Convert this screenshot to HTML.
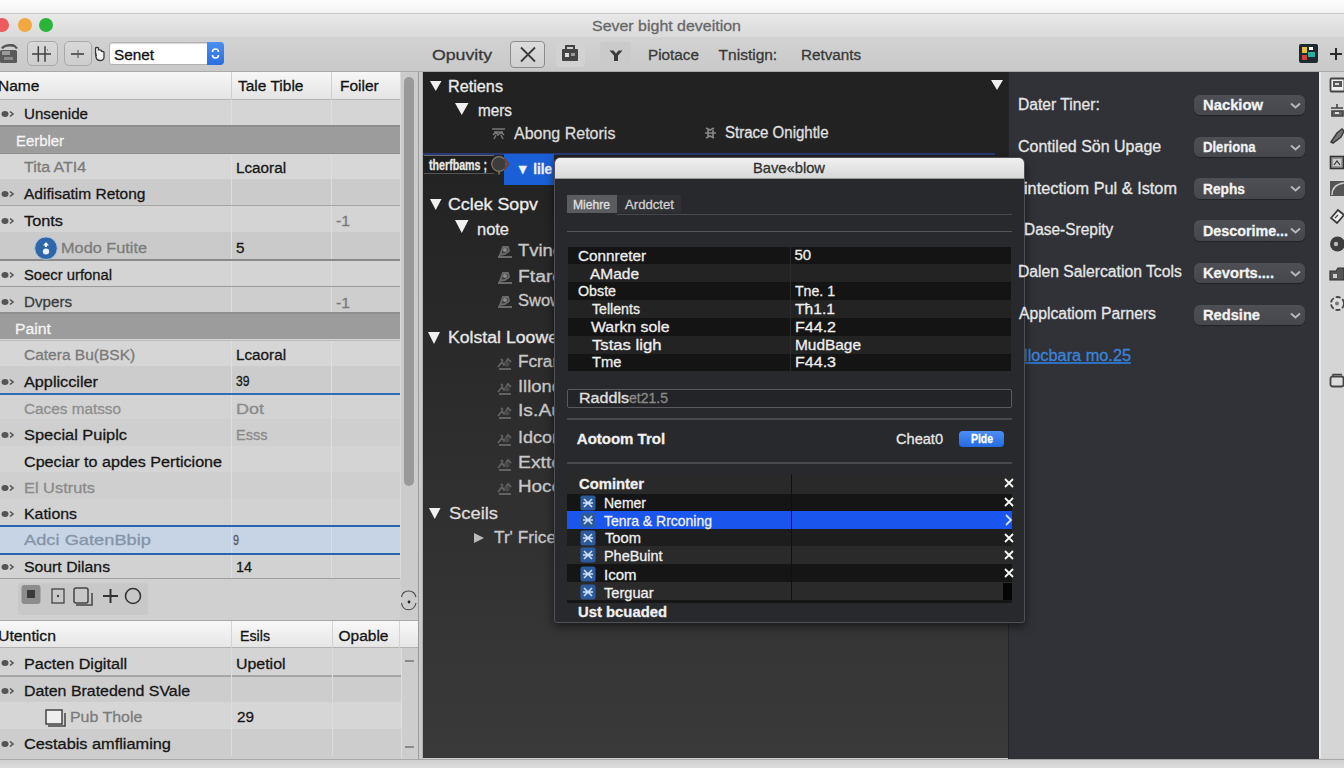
<!DOCTYPE html>
<html><head><meta charset="utf-8">
<style>
*{margin:0;padding:0;box-sizing:border-box}
html,body{width:1344px;height:768px;overflow:hidden;background:#d2d2d2;font-family:"Liberation Sans",sans-serif;position:relative}
.a{position:absolute}
.t{position:absolute;white-space:nowrap;line-height:1;transform-origin:0 50%;-webkit-text-stroke:0.3px currentColor}
svg.a{overflow:visible}
</style></head><body>
<div class="a" style="left:0px;top:0px;width:1344px;height:13px;background:linear-gradient(#fcfcfc,#f3f3f3)"></div>
<div class="a" style="left:0px;top:13px;width:1344px;height:24px;background:linear-gradient(#e8e8e8,#dadada);border-top:1px solid #c8c8c8"></div>
<div class="a" style="left:-5px;top:18px;width:14px;height:14px;border-radius:7px;background:#ec5b5d"></div>
<div class="a" style="left:18px;top:18px;width:14px;height:14px;border-radius:7px;background:#f2a83e"></div>
<div class="a" style="left:39px;top:18px;width:14px;height:14px;border-radius:7px;background:#2bb43a"></div>
<div class="a" style="left:0px;top:37px;width:1344px;height:35px;background:linear-gradient(#d2d2d2,#c9c9c9);border-bottom:1px solid #aaaaaa"></div>
<svg class="a" style="left:0;top:42px" width="20" height="22" viewBox="0 0 20 22"><path d="M1 6C3 2 12 1 15 3l3 3-2 1-2-2C11 4 5 4 3 7z" fill="#555"/><rect x="0" y="8" width="17" height="13" rx="1.5" fill="#5a5a5a"/><rect x="2" y="9" width="8" height="4" fill="#9a9a9a"/><rect x="4" y="15" width="9" height="3" fill="#8a8a8a"/></svg>
<div class="a" style="left:26.5px;top:41.3px;width:31.5px;height:24.5px;border:1px solid #a9a9a9;border-radius:5px;background:linear-gradient(#d9d9d9,#cdcdcd)"></div>
<svg class="a" style="left:26px;top:41px" width="32" height="25" viewBox="0 0 32 25"><path d="M12.3 5.2v15.5M19 5.2v15.5M6 13h19" stroke="#404040" stroke-width="1.5"/><path d="M21 9h1" stroke="#555" stroke-width="1.2"/></svg>
<div class="a" style="left:64px;top:41.3px;width:27.5px;height:24.5px;border:1px solid #a9a9a9;border-radius:5px;background:linear-gradient(#d9d9d9,#cdcdcd)"></div>
<svg class="a" style="left:64px;top:41px" width="28" height="25" viewBox="0 0 28 25"><path d="M7 13h13" stroke="#404040" stroke-width="1.6"/><path d="M14 9v8" stroke="#606060" stroke-width="1.2"/></svg>
<svg class="a" style="left:94px;top:46px" width="11" height="15" viewBox="0 0 11 15"><path d="M1.5 2.5c0-1.5 3-1.5 3 0v2c0-1 3-1 3 0.5v1c0-1 2.5-1 2.5 0.5v4.5c0 2.5-2 3.5-4 3.5s-3.5-1-4-3.5L1.5 7z" fill="#f2f2f2" stroke="#3a3a3a" stroke-width="1.3"/><path d="M1.5 6l1 4" stroke="#3a3a3a" stroke-width="1"/></svg>
<div class="a" style="left:109px;top:42px;width:115px;height:23px;background:#fff;border:1px solid #b0b0b0;border-radius:3px;box-shadow:inset 0 1px 1px rgba(0,0,0,.15)"></div>
<div class="a" style="left:207px;top:42px;width:17px;height:23px;background:linear-gradient(#4a90f0,#2a6ee0);border-radius:0 4px 4px 0"></div>
<svg class="a" style="left:209px;top:46px" width="13" height="15" viewBox="0 0 13 15"><path d="M3.5 6a3 3 0 0 1 6 0M9.5 9a3 3 0 0 1-6 0" fill="none" stroke="#fff" stroke-width="1.6"/></svg>
<div class="a" style="left:510px;top:41px;width:35px;height:27px;border:1px solid #8c8c8c;border-radius:4px;background:linear-gradient(#dcdcdc,#cfcfcf)"></div>
<svg class="a" style="left:519px;top:46px" width="18" height="17" viewBox="0 0 18 17"><path d="M2 1.5L16 15.5M16 1.5L2 15.5" stroke="#3a3a3a" stroke-width="1.8"/></svg>
<div class="a" style="left:556px;top:41px;width:29px;height:26px;border-radius:4px;background:#d2d2d2"></div>
<svg class="a" style="left:561px;top:45px" width="18" height="17" viewBox="0 0 18 17"><rect x="1" y="4" width="16" height="12" rx="1" fill="#444"/><rect x="5" y="1" width="8" height="4" fill="none" stroke="#444" stroke-width="2"/><rect x="4" y="8" width="4" height="4" fill="#ddd"/><rect x="10" y="8" width="4" height="3" fill="#999"/></svg>
<div class="a" style="left:600px;top:42px;width:31px;height:24px;border-radius:4px;background:#cacaca"></div>
<svg class="a" style="left:609px;top:49px" width="14" height="13" viewBox="0 0 14 13"><path d="M0.5 1.5h4l2.5 3 2.5-3h4L9 6.5V12H5V6.5z" fill="#3a3a3a"/></svg>
<svg class="a" style="left:1299px;top:44px" width="19" height="19" viewBox="0 0 19 19"><rect width="19" height="19" rx="2" fill="#1d2a30"/><rect x="3" y="3" width="5" height="6" fill="#e8c040"/><rect x="9" y="8" width="7" height="5" fill="#2ab0a0"/><rect x="3" y="11" width="5" height="5" fill="#d04040"/><rect x="10" y="3" width="4" height="3" fill="#fff"/></svg>
<svg class="a" style="left:1329px;top:47px" width="14" height="14" viewBox="0 0 14 14"><path d="M1 7h12M7 1v12" stroke="#2a2a2a" stroke-width="2"/></svg>
<div class="a" style="left:0px;top:72px;width:423px;height:686px;background:#cdcdcd"></div>
<div class="a" style="left:0px;top:72px;width:418px;height:28px;background:linear-gradient(#f7f7f7,#e4e4e4);border-bottom:1px solid #b5b5b5"></div>
<div class="a" style="left:231px;top:72px;width:1px;height:28px;background:#d0d0d0"></div>
<div class="a" style="left:331px;top:72px;width:1px;height:28px;background:#d0d0d0"></div>
<div class="a" style="left:0px;top:100px;width:401px;height:26px;background:#d5d5d5"></div>
<div class="a" style="left:0px;top:126px;width:401px;height:27px;background:#9c9c9c"></div>
<div class="a" style="left:0px;top:153px;width:401px;height:26px;background:#d7d7d7"></div>
<div class="a" style="left:0px;top:179px;width:401px;height:26.5px;background:#cbcbcb"></div>
<div class="a" style="left:0px;top:205.5px;width:401px;height:26.5px;background:#d4d4d4"></div>
<div class="a" style="left:0px;top:232px;width:401px;height:27px;background:#cacaca"></div>
<div class="a" style="left:0px;top:259px;width:401px;height:27px;background:#d4d4d4"></div>
<div class="a" style="left:0px;top:286px;width:401px;height:26.5px;background:#cecece"></div>
<div class="a" style="left:0px;top:312.5px;width:401px;height:26.5px;background:#9c9c9c"></div>
<div class="a" style="left:0px;top:339px;width:401px;height:27px;background:#d6d6d6"></div>
<div class="a" style="left:0px;top:366px;width:401px;height:26.5px;background:#cccccc"></div>
<div class="a" style="left:0px;top:392.5px;width:401px;height:26.5px;background:#d3d3d3"></div>
<div class="a" style="left:0px;top:419px;width:401px;height:27px;background:#cfcfcf"></div>
<div class="a" style="left:0px;top:446px;width:401px;height:26px;background:#d4d4d4"></div>
<div class="a" style="left:0px;top:472px;width:401px;height:27px;background:#cfcfcf"></div>
<div class="a" style="left:0px;top:499px;width:401px;height:27px;background:#d2d2d2"></div>
<div class="a" style="left:0px;top:526px;width:401px;height:26.5px;background:#c6d4e6"></div>
<div class="a" style="left:0px;top:552.5px;width:401px;height:26.5px;background:#d2d2d2"></div>
<div class="a" style="left:231px;top:100px;width:1px;height:26px;background:#dedede"></div>
<div class="a" style="left:331px;top:100px;width:1px;height:26px;background:#dedede"></div>
<div class="a" style="left:231px;top:153px;width:1px;height:26px;background:#dedede"></div>
<div class="a" style="left:331px;top:153px;width:1px;height:26px;background:#dedede"></div>
<div class="a" style="left:231px;top:179px;width:1px;height:26.5px;background:#dedede"></div>
<div class="a" style="left:331px;top:179px;width:1px;height:26.5px;background:#dedede"></div>
<div class="a" style="left:231px;top:205.5px;width:1px;height:26.5px;background:#dedede"></div>
<div class="a" style="left:331px;top:205.5px;width:1px;height:26.5px;background:#dedede"></div>
<div class="a" style="left:231px;top:232px;width:1px;height:27px;background:#dedede"></div>
<div class="a" style="left:331px;top:232px;width:1px;height:27px;background:#dedede"></div>
<div class="a" style="left:231px;top:259px;width:1px;height:27px;background:#dedede"></div>
<div class="a" style="left:331px;top:259px;width:1px;height:27px;background:#dedede"></div>
<div class="a" style="left:231px;top:286px;width:1px;height:26.5px;background:#dedede"></div>
<div class="a" style="left:331px;top:286px;width:1px;height:26.5px;background:#dedede"></div>
<div class="a" style="left:231px;top:339px;width:1px;height:27px;background:#dedede"></div>
<div class="a" style="left:331px;top:339px;width:1px;height:27px;background:#dedede"></div>
<div class="a" style="left:231px;top:366px;width:1px;height:26.5px;background:#dedede"></div>
<div class="a" style="left:331px;top:366px;width:1px;height:26.5px;background:#dedede"></div>
<div class="a" style="left:231px;top:392.5px;width:1px;height:26.5px;background:#dedede"></div>
<div class="a" style="left:331px;top:392.5px;width:1px;height:26.5px;background:#dedede"></div>
<div class="a" style="left:231px;top:419px;width:1px;height:27px;background:#dedede"></div>
<div class="a" style="left:331px;top:419px;width:1px;height:27px;background:#dedede"></div>
<div class="a" style="left:231px;top:446px;width:1px;height:26px;background:#dedede"></div>
<div class="a" style="left:331px;top:446px;width:1px;height:26px;background:#dedede"></div>
<div class="a" style="left:231px;top:472px;width:1px;height:27px;background:#dedede"></div>
<div class="a" style="left:331px;top:472px;width:1px;height:27px;background:#dedede"></div>
<div class="a" style="left:231px;top:499px;width:1px;height:27px;background:#dedede"></div>
<div class="a" style="left:331px;top:499px;width:1px;height:27px;background:#dedede"></div>
<div class="a" style="left:231px;top:526px;width:1px;height:26.5px;background:#dedede"></div>
<div class="a" style="left:331px;top:526px;width:1px;height:26.5px;background:#dedede"></div>
<div class="a" style="left:231px;top:552.5px;width:1px;height:26.5px;background:#dedede"></div>
<div class="a" style="left:331px;top:552.5px;width:1px;height:26.5px;background:#dedede"></div>
<div class="a" style="left:0px;top:125px;width:401px;height:1.5px;background:#8e8e8e"></div>
<div class="a" style="left:0px;top:152.5px;width:401px;height:1px;background:#8e8e8e"></div>
<div class="a" style="left:0px;top:205px;width:401px;height:1px;background:#a6a6a6"></div>
<div class="a" style="left:0px;top:258.5px;width:401px;height:2.5px;background:#8a8a8a"></div>
<div class="a" style="left:0px;top:285.5px;width:401px;height:1.5px;background:#9a9a9a"></div>
<div class="a" style="left:0px;top:312px;width:401px;height:1.5px;background:#8e8e8e"></div>
<div class="a" style="left:0px;top:340px;width:401px;height:1px;background:#bdbdbd"></div>
<div class="a" style="left:0px;top:393px;width:401px;height:2px;background:#2f6eb5"></div>
<div class="a" style="left:0px;top:525px;width:401px;height:2px;background:#2c64b0"></div>
<div class="a" style="left:0px;top:552.5px;width:401px;height:2px;background:#2c64b0"></div>
<div class="a" style="left:0px;top:578px;width:401px;height:1.5px;background:#9e9e9e"></div>
<svg class="a" style="left:1px;top:108.5px" width="14" height="10" viewBox="0 0 14 10"><ellipse cx="4" cy="5" rx="3.5" ry="3" fill="#555"/><path d="M9 2.5l3 2.5-3 2.5" fill="none" stroke="#555" stroke-width="1.6"/></svg>
<svg class="a" style="left:1px;top:189px" width="14" height="10" viewBox="0 0 14 10"><ellipse cx="4" cy="5" rx="3.5" ry="3" fill="#555"/><path d="M9 2.5l3 2.5-3 2.5" fill="none" stroke="#555" stroke-width="1.6"/></svg>
<svg class="a" style="left:1px;top:216px" width="14" height="10" viewBox="0 0 14 10"><ellipse cx="4" cy="5" rx="3.5" ry="3" fill="#555"/><path d="M9 2.5l3 2.5-3 2.5" fill="none" stroke="#555" stroke-width="1.6"/></svg>
<svg class="a" style="left:1px;top:269.5px" width="14" height="10" viewBox="0 0 14 10"><ellipse cx="4" cy="5" rx="3.5" ry="3" fill="#555"/><path d="M9 2.5l3 2.5-3 2.5" fill="none" stroke="#555" stroke-width="1.6"/></svg>
<svg class="a" style="left:1px;top:297px" width="14" height="10" viewBox="0 0 14 10"><ellipse cx="4" cy="5" rx="3.5" ry="3" fill="#555"/><path d="M9 2.5l3 2.5-3 2.5" fill="none" stroke="#555" stroke-width="1.6"/></svg>
<svg class="a" style="left:1px;top:376.5px" width="14" height="10" viewBox="0 0 14 10"><ellipse cx="4" cy="5" rx="3.5" ry="3" fill="#555"/><path d="M9 2.5l3 2.5-3 2.5" fill="none" stroke="#555" stroke-width="1.6"/></svg>
<svg class="a" style="left:1px;top:430px" width="14" height="10" viewBox="0 0 14 10"><ellipse cx="4" cy="5" rx="3.5" ry="3" fill="#555"/><path d="M9 2.5l3 2.5-3 2.5" fill="none" stroke="#555" stroke-width="1.6"/></svg>
<svg class="a" style="left:1px;top:482.5px" width="14" height="10" viewBox="0 0 14 10"><ellipse cx="4" cy="5" rx="3.5" ry="3" fill="#555"/><path d="M9 2.5l3 2.5-3 2.5" fill="none" stroke="#555" stroke-width="1.6"/></svg>
<svg class="a" style="left:1px;top:509px" width="14" height="10" viewBox="0 0 14 10"><ellipse cx="4" cy="5" rx="3.5" ry="3" fill="#555"/><path d="M9 2.5l3 2.5-3 2.5" fill="none" stroke="#555" stroke-width="1.6"/></svg>
<svg class="a" style="left:1px;top:562px" width="14" height="10" viewBox="0 0 14 10"><ellipse cx="4" cy="5" rx="3.5" ry="3" fill="#555"/><path d="M9 2.5l3 2.5-3 2.5" fill="none" stroke="#555" stroke-width="1.6"/></svg>
<svg class="a" style="left:34px;top:236px" width="25" height="25" viewBox="0 0 25 25"><circle cx="12" cy="12.2" r="11.3" fill="#2f66aa" stroke="#a9c2dc" stroke-width="1"/><path d="M9 9.5l3-3.5 3 3.5h-2v1.5h-2V9.5z" fill="#f4f8ff"/><ellipse cx="12" cy="15.5" rx="3.2" ry="3" fill="#e8f0ff"/></svg>
<div class="a" style="left:400px;top:72px;width:18px;height:545px;background:#cbcbcb;border-left:1px solid #dadada"></div>
<div class="a" style="left:404.4px;top:77px;width:9.5px;height:409px;background:#999;border-radius:5px"></div>
<div class="a" style="left:418px;top:72px;width:5px;height:687px;background:#cbcbcb;border-left:1px solid #9c9c9c;border-right:1px solid #b0b0b0"></div>
<div class="a" style="left:0px;top:579px;width:401px;height:41px;background:#d0d0d0"></div>
<div class="a" style="left:18px;top:582.5px;width:130px;height:32px;background:#c8c8c8;border-radius:3px"></div>
<svg class="a" style="left:20px;top:584px" width="126" height="28" viewBox="0 0 126 28"><rect x="1.5" y="1" width="19" height="19" rx="3" fill="#8c8c8c"/><rect x="7" y="6" width="8" height="8" fill="#3a3a3a"/><rect x="32" y="5" width="12" height="14" fill="none" stroke="#444" stroke-width="1.3"/><circle cx="38" cy="12" r="1.2" fill="#444"/><rect x="54" y="4" width="14" height="15" rx="2" fill="none" stroke="#444" stroke-width="1.5"/><path d="M56 21h16v-12" fill="none" stroke="#444" stroke-width="1.5"/><path d="M83 12h15M90.5 5v14" stroke="#333" stroke-width="2"/><circle cx="113" cy="12" r="7.5" fill="none" stroke="#333" stroke-width="1.6"/></svg>
<svg class="a" style="left:400px;top:585px" width="18" height="31" viewBox="0 0 18 31"><path d="M1.5 12C3 4 14 4 16 12" fill="none" stroke="#444" stroke-width="1.1"/><path d="M1.5 18C3 27 14 27 16 18" fill="none" stroke="#444" stroke-width="1.1"/><circle cx="9" cy="17" r="1.4" fill="#222"/></svg>
<div class="a" style="left:0px;top:619.5px;width:418px;height:1.5px;background:#a9a9a9"></div>
<div class="a" style="left:0px;top:621px;width:418px;height:27px;background:linear-gradient(#f8f8f8,#e6e6e6);border-bottom:1px solid #b2b2b2"></div>
<div class="a" style="left:231px;top:621px;width:1px;height:27px;background:#d4d4d4"></div>
<div class="a" style="left:332px;top:621px;width:1px;height:27px;background:#d4d4d4"></div>
<div class="a" style="left:399px;top:621px;width:1px;height:27px;background:#d4d4d4"></div>
<div class="a" style="left:0px;top:648px;width:401px;height:27.5px;background:#d4d4d4"></div>
<div class="a" style="left:0px;top:675.5px;width:401px;height:26.5px;background:#cdcdcd"></div>
<div class="a" style="left:0px;top:702px;width:401px;height:27px;background:#d6d6d6"></div>
<div class="a" style="left:0px;top:729px;width:401px;height:27px;background:#cdcdcd"></div>
<div class="a" style="left:0px;top:675px;width:401px;height:1.5px;background:#a6a6a6"></div>
<div class="a" style="left:231px;top:648px;width:1px;height:108px;background:#dcdcdc"></div>
<div class="a" style="left:332px;top:648px;width:1px;height:108px;background:#dcdcdc"></div>
<div class="a" style="left:401px;top:648px;width:17px;height:110px;background:#cdcdcd;border-left:1px solid #dedede"></div>
<div class="a" style="left:405px;top:660px;width:9px;height:1.5px;background:#8a8a8a"></div>
<div class="a" style="left:405px;top:746px;width:9px;height:1.5px;background:#8a8a8a"></div>
<svg class="a" style="left:1px;top:658.4px" width="14" height="10" viewBox="0 0 14 10"><ellipse cx="4" cy="5" rx="3.5" ry="3" fill="#555"/><path d="M9 2.5l3 2.5-3 2.5" fill="none" stroke="#555" stroke-width="1.6"/></svg>
<svg class="a" style="left:1px;top:685.6px" width="14" height="10" viewBox="0 0 14 10"><ellipse cx="4" cy="5" rx="3.5" ry="3" fill="#555"/><path d="M9 2.5l3 2.5-3 2.5" fill="none" stroke="#555" stroke-width="1.6"/></svg>
<svg class="a" style="left:1px;top:738.7px" width="14" height="10" viewBox="0 0 14 10"><ellipse cx="4" cy="5" rx="3.5" ry="3" fill="#555"/><path d="M9 2.5l3 2.5-3 2.5" fill="none" stroke="#555" stroke-width="1.6"/></svg>
<svg class="a" style="left:45px;top:709px" width="21" height="18" viewBox="0 0 21 18"><rect x="1" y="1" width="16" height="14" fill="#eee" stroke="#444" stroke-width="1.5"/><path d="M3 17h17V4" fill="none" stroke="#444" stroke-width="1.5"/></svg>
<div class="t" style="left:592px;top:19.4px;font-size:14.5px;color:#686868;transform:scaleX(1.100);">Sever bight deveition</div>
<div class="t" style="left:114px;top:46.9px;font-size:15.5px;color:#111;transform:scaleX(0.988);">Senet</div>
<div class="t" style="left:431.5px;top:47.4px;font-size:15.5px;color:#383838;transform:scaleX(1.142);">Opuvity</div>
<div class="t" style="left:648px;top:47.4px;font-size:15.5px;color:#383838;transform:scaleX(0.986);">Piotace</div>
<div class="t" style="left:718.6px;top:47.4px;font-size:15.5px;color:#383838;">Tnistign:</div>
<div class="t" style="left:800.7px;top:47.4px;font-size:15.5px;color:#383838;transform:scaleX(0.981);">Retvants</div>
<div class="t" style="left:-2px;top:77.9px;font-size:15.5px;color:#141414;">Name</div>
<div class="t" style="left:238px;top:77.9px;font-size:15.5px;color:#141414;">Tale Tible</div>
<div class="t" style="left:340px;top:77.9px;font-size:15.5px;color:#141414;">Foiler</div>
<div class="t" style="left:24px;top:105.9px;font-size:15.5px;color:#161616;transform:scaleX(0.977);">Unsenide</div>
<div class="t" style="left:15.5px;top:132.9px;font-size:15.5px;color:#f4f4f4;transform:scaleX(0.961);">Eerbler</div>
<div class="t" style="left:24px;top:159.4px;font-size:15.5px;color:#7a7a7a;transform:scaleX(1.030);">Tita ATI4</div>
<div class="t" style="left:235.5px;top:159.7px;font-size:15.5px;color:#161616;transform:scaleX(0.984);">Lcaoral</div>
<div class="t" style="left:24px;top:186.4px;font-size:15.5px;color:#161616;">Adifisatim Retong</div>
<div class="t" style="left:24px;top:213.2px;font-size:15.5px;color:#161616;transform:scaleX(1.053);">Tonts</div>
<div class="t" style="left:336px;top:213.4px;font-size:15.5px;color:#7a7a7a;transform:scaleX(1.016);">-1</div>
<div class="t" style="left:61px;top:240.1px;font-size:15.5px;color:#7c7c7c;transform:scaleX(1.051);">Modo Futite</div>
<div class="t" style="left:235.5px;top:239.9px;font-size:15.5px;color:#161616;transform:scaleX(0.986);">5</div>
<div class="t" style="left:24px;top:267.1px;font-size:15.5px;color:#161616;transform:scaleX(0.955);">Soecr urfonal</div>
<div class="t" style="left:24px;top:294.4px;font-size:15.5px;color:#3c3c3c;transform:scaleX(0.978);">Dvpers</div>
<div class="t" style="left:336px;top:295.2px;font-size:15.5px;color:#7a7a7a;transform:scaleX(1.016);">-1</div>
<div class="t" style="left:15px;top:320.8px;font-size:15.5px;color:#f4f4f4;transform:scaleX(1.019);">Paint</div>
<div class="t" style="left:24px;top:347.4px;font-size:15.5px;color:#7a7a7a;">Catera Bu(BSK)</div>
<div class="t" style="left:235.5px;top:347.1px;font-size:15.5px;color:#161616;transform:scaleX(0.984);">Lcaoral</div>
<div class="t" style="left:24px;top:373.8px;font-size:15.5px;color:#161616;transform:scaleX(1.048);">Applicciler</div>
<div class="t" style="left:235.5px;top:373.4px;font-size:15.5px;color:#161616;transform:scaleX(0.783);">39</div>
<div class="t" style="left:24px;top:401.2px;font-size:15.5px;color:#8e8e8e;transform:scaleX(0.988);">Caces matsso</div>
<div class="t" style="left:236px;top:400.9px;font-size:15.5px;color:#8a8a8a;transform:scaleX(1.161);">Dot</div>
<div class="t" style="left:24px;top:427.4px;font-size:15.5px;color:#161616;transform:scaleX(1.058);">Special Puiplc</div>
<div class="t" style="left:235.5px;top:427.4px;font-size:15.5px;color:#8a8a8a;transform:scaleX(0.938);">Esss</div>
<div class="t" style="left:24px;top:454.0px;font-size:15.5px;color:#161616;transform:scaleX(1.040);">Cpeciar to apdes Perticione</div>
<div class="t" style="left:24px;top:479.9px;font-size:15.5px;color:#8a8a8a;transform:scaleX(1.057);">El Ustruts</div>
<div class="t" style="left:24px;top:506.4px;font-size:15.5px;color:#161616;transform:scaleX(1.025);">Kations</div>
<div class="t" style="left:24px;top:532.4px;font-size:15.5px;color:#8594a6;transform:scaleX(1.179);">Adci GatenBbip</div>
<div class="t" style="left:233px;top:532.4px;font-size:15.5px;color:#5a5a5a;transform:scaleX(0.696);">9</div>
<div class="t" style="left:24px;top:559.4px;font-size:15.5px;color:#161616;transform:scaleX(1.019);">Sourt Dilans</div>
<div class="t" style="left:235.5px;top:559.4px;font-size:15.5px;color:#161616;transform:scaleX(0.928);">14</div>
<div class="t" style="left:-2px;top:628.0px;font-size:15.5px;color:#141414;transform:scaleX(1.020);">Utenticn</div>
<div class="t" style="left:240px;top:628.0px;font-size:15.5px;color:#141414;transform:scaleX(0.917);">Esils</div>
<div class="t" style="left:338.5px;top:628.0px;font-size:15.5px;color:#141414;">Opable</div>
<div class="t" style="left:24px;top:655.8px;font-size:15.5px;color:#161616;transform:scaleX(1.040);">Pacten Digitall</div>
<div class="t" style="left:236px;top:655.8px;font-size:15.5px;color:#161616;transform:scaleX(1.026);">Upetiol</div>
<div class="t" style="left:24px;top:683.0px;font-size:15.5px;color:#161616;transform:scaleX(1.027);">Daten Bratedend SVale</div>
<div class="t" style="left:69.7px;top:709.4px;font-size:15.5px;color:#7c7c7c;transform:scaleX(1.027);">Pub Thole</div>
<div class="t" style="left:236.7px;top:709.4px;font-size:15.5px;color:#161616;transform:scaleX(0.986);">29</div>
<div class="t" style="left:24px;top:736.1px;font-size:15.5px;color:#161616;transform:scaleX(1.053);">Cestabis amfliaming</div>
<div class="a" style="left:423px;top:72px;width:585px;height:686px;background:linear-gradient(#212121 0px,#242424 130px,#2b2b2b 300px,#323232 490px,#3a3a3a 686px)"></div>
<svg class="a" style="left:430px;top:81px" width="11.5" height="10" viewBox="0 0 11.5 10"><path d="M0 0H11.5L5.75 10z" fill="#f0f0f0"/></svg>
<svg class="a" style="left:455px;top:103px" width="13.5" height="12" viewBox="0 0 13.5 12"><path d="M0 0H13.5L6.75 12z" fill="#f0f0f0"/></svg>
<svg class="a" style="left:490px;top:125px" width="17" height="16" viewBox="0 0 17 16"><path d="M2 4h13M4 7h9M3 10l3-3 2 3 3-3 3 3M4 14l2-4M13 14l-2-4" stroke="#777" stroke-width="1.5" fill="none"/></svg>
<svg class="a" style="left:703px;top:125px" width="15" height="17" viewBox="0 0 15 17"><path d="M3 3l4 2 4-2M2 8h11M3 13l4-2 4 2M5 5v7M10 5v7" stroke="#888" stroke-width="1.6" fill="none"/></svg>
<svg class="a" style="left:991px;top:80px" width="12" height="10" viewBox="0 0 12 10"><path d="M0 0H12L6.0 10z" fill="#f0f0f0"/></svg>
<div class="a" style="left:423px;top:153px;width:572px;height:2px;background:#2a3a78"></div>
<div class="a" style="left:504px;top:153.5px;width:50px;height:31.5px;background:#1b5fd6"></div>
<div class="a" style="left:424px;top:154.5px;width:70px;height:19px;background:#1f1f1f;border-top:1.5px solid #6a6a6a;border-bottom:1px solid #555"></div>
<svg class="a" style="left:491px;top:155px" width="18" height="20" viewBox="0 0 18 20"><circle cx="8" cy="9" r="7.3" fill="#3c3c3c" stroke="#8a7a6a" stroke-width="1.2"/><path d="M13 3.5l4 5.5-4 5.5" fill="none" stroke="#7a3a20" stroke-width="2"/><path d="M8 16.5v3" stroke="#8a7a40" stroke-width="1.5"/></svg>
<svg class="a" style="left:430px;top:199px" width="11.5" height="11" viewBox="0 0 11.5 11"><path d="M0 0H11.5L5.75 11z" fill="#f0f0f0"/></svg>
<svg class="a" style="left:455px;top:220px" width="13.5" height="13" viewBox="0 0 13.5 13"><path d="M0 0H13.5L6.75 13z" fill="#f0f0f0"/></svg>
<svg class="a" style="left:496px;top:244px" width="18" height="15" viewBox="0 0 18 15"><path d="M2 13h14M4 11l3-8h5l1 4-4 3z" stroke="#6a6a6a" stroke-width="1.8" fill="#3e3e3e"/><circle cx="9" cy="6" r="2" fill="#888"/></svg>
<svg class="a" style="left:496px;top:269.6px" width="18" height="15" viewBox="0 0 18 15"><path d="M2 13h14M4 11l3-8h5l1 4-4 3z" stroke="#6a6a6a" stroke-width="1.8" fill="#3e3e3e"/><circle cx="9" cy="6" r="2" fill="#888"/></svg>
<svg class="a" style="left:496px;top:294px" width="18" height="15" viewBox="0 0 18 15"><path d="M2 13h14M4 11l3-8h5l1 4-4 3z" stroke="#6a6a6a" stroke-width="1.8" fill="#3e3e3e"/><circle cx="9" cy="6" r="2" fill="#888"/></svg>
<svg class="a" style="left:428px;top:332px" width="12" height="12" viewBox="0 0 12 12"><path d="M0 0H12L6.0 12z" fill="#f0f0f0"/></svg>
<svg class="a" style="left:496px;top:355px" width="18" height="15" viewBox="0 0 18 15"><path d="M2 12l4-5 2 3 4-6 3 3M5 4l2 2M3 14h12" stroke="#626262" stroke-width="1.8" fill="none"/><circle cx="11" cy="9" r="2.5" fill="#4a4a4a"/></svg>
<svg class="a" style="left:496px;top:379.5px" width="18" height="15" viewBox="0 0 18 15"><path d="M2 12l4-5 2 3 4-6 3 3M5 4l2 2M3 14h12" stroke="#626262" stroke-width="1.8" fill="none"/><circle cx="11" cy="9" r="2.5" fill="#4a4a4a"/></svg>
<svg class="a" style="left:496px;top:404px" width="18" height="15" viewBox="0 0 18 15"><path d="M2 12l4-5 2 3 4-6 3 3M5 4l2 2M3 14h12" stroke="#626262" stroke-width="1.8" fill="none"/><circle cx="11" cy="9" r="2.5" fill="#4a4a4a"/></svg>
<svg class="a" style="left:496px;top:430.6px" width="18" height="15" viewBox="0 0 18 15"><path d="M2 12l4-5 2 3 4-6 3 3M5 4l2 2M3 14h12" stroke="#626262" stroke-width="1.8" fill="none"/><circle cx="11" cy="9" r="2.5" fill="#4a4a4a"/></svg>
<svg class="a" style="left:496px;top:455.8px" width="18" height="15" viewBox="0 0 18 15"><path d="M2 12l4-5 2 3 4-6 3 3M5 4l2 2M3 14h12" stroke="#626262" stroke-width="1.8" fill="none"/><circle cx="11" cy="9" r="2.5" fill="#4a4a4a"/></svg>
<svg class="a" style="left:496px;top:479.5px" width="18" height="15" viewBox="0 0 18 15"><path d="M2 12l4-5 2 3 4-6 3 3M5 4l2 2M3 14h12" stroke="#626262" stroke-width="1.8" fill="none"/><circle cx="11" cy="9" r="2.5" fill="#4a4a4a"/></svg>
<svg class="a" style="left:429px;top:508px" width="11.5" height="11" viewBox="0 0 11.5 11"><path d="M0 0H11.5L5.75 11z" fill="#f0f0f0"/></svg>
<svg class="a" style="left:474px;top:533px" width="10" height="10" viewBox="0 0 10 10"><path d="M0 0L10 5L0 10z" fill="#bbb"/></svg>
<div class="a" style="left:1008px;top:72px;width:311px;height:687px;background:#303237;border-left:1.5px solid #242528"></div>
<div class="a" style="left:1319px;top:72px;width:25px;height:686px;background:#d5d5d5;border-left:2px solid #e8e8e8"></div>
<div class="a" style="left:1194px;top:94.8px;width:111px;height:20.5px;background:linear-gradient(#4d4f54,#45474c);border-radius:6px;box-shadow:0 1px 1px rgba(0,0,0,.35)"></div>
<svg class="a" style="left:1290px;top:101.8px" width="11" height="7" viewBox="0 0 11 7"><path d="M1 1.5l4.5 4L10 1.5" fill="none" stroke="#b8b8b8" stroke-width="1.9"/></svg>
<div class="a" style="left:1194px;top:136.7px;width:111px;height:20.5px;background:linear-gradient(#4d4f54,#45474c);border-radius:6px;box-shadow:0 1px 1px rgba(0,0,0,.35)"></div>
<svg class="a" style="left:1290px;top:143.7px" width="11" height="7" viewBox="0 0 11 7"><path d="M1 1.5l4.5 4L10 1.5" fill="none" stroke="#b8b8b8" stroke-width="1.9"/></svg>
<div class="a" style="left:1194px;top:178.3px;width:111px;height:20.5px;background:linear-gradient(#4d4f54,#45474c);border-radius:6px;box-shadow:0 1px 1px rgba(0,0,0,.35)"></div>
<svg class="a" style="left:1290px;top:185.3px" width="11" height="7" viewBox="0 0 11 7"><path d="M1 1.5l4.5 4L10 1.5" fill="none" stroke="#b8b8b8" stroke-width="1.9"/></svg>
<div class="a" style="left:1194px;top:220.3px;width:111px;height:20.5px;background:linear-gradient(#4d4f54,#45474c);border-radius:6px;box-shadow:0 1px 1px rgba(0,0,0,.35)"></div>
<svg class="a" style="left:1290px;top:227.3px" width="11" height="7" viewBox="0 0 11 7"><path d="M1 1.5l4.5 4L10 1.5" fill="none" stroke="#b8b8b8" stroke-width="1.9"/></svg>
<div class="a" style="left:1194px;top:262.5px;width:111px;height:20.5px;background:linear-gradient(#4d4f54,#45474c);border-radius:6px;box-shadow:0 1px 1px rgba(0,0,0,.35)"></div>
<svg class="a" style="left:1290px;top:269.5px" width="11" height="7" viewBox="0 0 11 7"><path d="M1 1.5l4.5 4L10 1.5" fill="none" stroke="#b8b8b8" stroke-width="1.9"/></svg>
<div class="a" style="left:1194px;top:304.7px;width:111px;height:20.5px;background:linear-gradient(#4d4f54,#45474c);border-radius:6px;box-shadow:0 1px 1px rgba(0,0,0,.35)"></div>
<svg class="a" style="left:1290px;top:311.7px" width="11" height="7" viewBox="0 0 11 7"><path d="M1 1.5l4.5 4L10 1.5" fill="none" stroke="#b8b8b8" stroke-width="1.9"/></svg>
<div class="a" style="left:1024px;top:362px;width:107px;height:1.5px;background:#2f6fc0"></div>
<svg class="a" style="left:1329px;top:77px" width="17" height="17" viewBox="0 0 17 17"><rect x="1.5" y="1.5" width="14" height="13" rx="1" fill="#eee" stroke="#444" stroke-width="1.8"/><rect x="4" y="4" width="9" height="6" fill="#555"/><rect x="6" y="6" width="4" height="2" fill="#ddd"/></svg>
<svg class="a" style="left:1329px;top:102px" width="17" height="17" viewBox="0 0 17 17"><path d="M2 6h12M8 2v4M3 9h11v5H3z" fill="#666" stroke="#444" stroke-width="1.6"/><rect x="6" y="10" width="4" height="2" fill="#ddd"/></svg>
<svg class="a" style="left:1329px;top:127px" width="17" height="17" viewBox="0 0 17 17"><path d="M2 15l6-9 5-4 2 2-3 6-8 6z" fill="#777" stroke="#3a3a3a" stroke-width="1.5"/></svg>
<svg class="a" style="left:1329px;top:155px" width="17" height="17" viewBox="0 0 17 17"><rect x="1.5" y="1.5" width="13" height="12" fill="#999" stroke="#333" stroke-width="1.6"/><path d="M4 4h8v7H4z" fill="#ccc"/><path d="M5 10l3-4 3 4" stroke="#333" stroke-width="1.2" fill="none"/></svg>
<svg class="a" style="left:1329px;top:180px" width="17" height="17" viewBox="0 0 17 17"><rect x="1" y="1" width="15" height="15" fill="#555"/><path d="M3 15C3 8 7 4 15 3" stroke="#ccc" stroke-width="1.5" fill="none"/></svg>
<svg class="a" style="left:1329px;top:208px" width="17" height="17" viewBox="0 0 17 17"><path d="M2 10l7-8 6 5-7 8z" fill="#eee" stroke="#3a3a3a" stroke-width="1.8"/><path d="M6 10l3-3" stroke="#444" stroke-width="1.2"/></svg>
<svg class="a" style="left:1329px;top:235px" width="17" height="17" viewBox="0 0 17 17"><circle cx="8.5" cy="9" r="7.5" fill="#3d3d3d"/><circle cx="7" cy="9" r="2.2" fill="#bbb"/></svg>
<svg class="a" style="left:1329px;top:265px" width="17" height="17" viewBox="0 0 17 17"><path d="M1 6h6l2-3h6v12H1z" fill="#555" stroke="#333" stroke-width="1.2"/><rect x="4" y="9" width="4" height="4" fill="#ccc"/></svg>
<svg class="a" style="left:1329px;top:295px" width="17" height="17" viewBox="0 0 17 17"><circle cx="8.5" cy="8.5" r="6.5" fill="#ddd" stroke="#444" stroke-width="1.8" stroke-dasharray="5 2"/><circle cx="8" cy="8.5" r="2" fill="#777"/></svg>
<svg class="a" style="left:1329px;top:373px" width="17" height="17" viewBox="0 0 17 17"><rect x="1.5" y="3.5" width="13" height="10" rx="2" fill="#ddd" stroke="#444" stroke-width="1.8"/><path d="M4 3.5v-2h9" stroke="#444" stroke-width="1.4" fill="none"/></svg>
<div class="t" style="left:448px;top:79.0px;font-size:16px;color:#ececec;transform:scaleX(1.014);">Retiens</div>
<div class="t" style="left:478px;top:103.2px;font-size:16px;color:#e6e6e6;transform:scaleX(0.956);">mers</div>
<div class="t" style="left:514px;top:126.0px;font-size:16px;color:#dcdcdc;">Abong Retoris</div>
<div class="t" style="left:725px;top:125.4px;font-size:16px;color:#e0e0e0;transform:scaleX(0.939);">Strace Onightle</div>
<div class="t" style="left:429px;top:158.2px;font-size:14.5px;color:#e8e8e8;font-weight:bold;transform:scaleX(0.735);">therfbams ;</div>
<div class="t" style="left:515.5px;top:161.6px;font-size:14px;color:#eef4ff;font-weight:bold;transform:scaleX(0.968);">▼ lile</div>
<div class="t" style="left:448px;top:197.2px;font-size:16px;color:#ececec;transform:scaleX(1.112);">Cclek Sopv</div>
<div class="t" style="left:477px;top:222.2px;font-size:16px;color:#e6e6e6;transform:scaleX(1.028);">note</div>
<div class="t" style="left:518px;top:243.2px;font-size:16px;color:#c8c8c8;transform:scaleX(1.151);">Tvinc</div>
<div class="t" style="left:518px;top:268.8px;font-size:16px;color:#c8c8c8;transform:scaleX(1.207);">Ftarc</div>
<div class="t" style="left:518px;top:293.2px;font-size:16px;color:#c8c8c8;transform:scaleX(1.031);">Swow</div>
<div class="t" style="left:448px;top:329.5px;font-size:16px;color:#e6e6e6;transform:scaleX(1.104);">Kolstal Loowe</div>
<div class="t" style="left:517.5px;top:354.2px;font-size:16px;color:#c8c8c8;transform:scaleX(1.076);">Fcran</div>
<div class="t" style="left:517.5px;top:378.7px;font-size:16px;color:#c8c8c8;transform:scaleX(1.150);">Illond</div>
<div class="t" style="left:517.5px;top:403.2px;font-size:16px;color:#c8c8c8;transform:scaleX(1.207);">Is.Au</div>
<div class="t" style="left:517.5px;top:429.8px;font-size:16px;color:#c8c8c8;transform:scaleX(1.124);">Idcon</div>
<div class="t" style="left:517.5px;top:455.0px;font-size:16px;color:#c8c8c8;transform:scaleX(1.207);">Extte</div>
<div class="t" style="left:517.5px;top:478.7px;font-size:16px;color:#c8c8c8;transform:scaleX(1.178);">Hoce</div>
<div class="t" style="left:448.8px;top:506.0px;font-size:16px;color:#dcdcdc;transform:scaleX(1.148);">Sceils</div>
<div class="t" style="left:494px;top:529.7px;font-size:16px;color:#c8c8c8;transform:scaleX(1.077);">Tr' Frice</div>
<div class="t" style="left:1203px;top:98.2px;font-size:14.5px;color:#f2f2f2;font-weight:bold;transform:scaleX(1.020);">Nackiow</div>
<div class="t" style="left:1203px;top:140.1px;font-size:14.5px;color:#f2f2f2;font-weight:bold;transform:scaleX(0.905);">Dleriona</div>
<div class="t" style="left:1203px;top:181.7px;font-size:14.5px;color:#f2f2f2;font-weight:bold;transform:scaleX(0.948);">Rephs</div>
<div class="t" style="left:1203px;top:223.7px;font-size:14.5px;color:#f2f2f2;font-weight:bold;transform:scaleX(0.986);">Descorime...</div>
<div class="t" style="left:1203px;top:265.9px;font-size:14.5px;color:#f2f2f2;font-weight:bold;transform:scaleX(1.013);">Kevorts....</div>
<div class="t" style="left:1203px;top:308.1px;font-size:14.5px;color:#f2f2f2;font-weight:bold;transform:scaleX(1.011);">Redsine</div>
<div class="t" style="left:1024.4px;top:347.5px;font-size:16px;color:#3a84dc;transform:scaleX(1.020);">llocbara mo.25</div>
<div class="a" style="left:554px;top:157px;width:471px;height:466px;background:#28292d;border:1px solid #505156;border-radius:6px 6px 3px 3px;box-shadow:0 3px 10px rgba(0,0,0,.55);overflow:hidden">
<div class="a" style="left:0;top:0;width:471px;height:21px;background:linear-gradient(#f0f0f0,#d8d8d8);border-bottom:1px solid #999"></div>
</div>
<div class="a" style="left:567px;top:195px;width:50px;height:18px;background:#5b5c60"></div>
<div class="a" style="left:617px;top:195px;width:64px;height:18px;background:#2f3034"></div>
<div class="a" style="left:617px;top:213.5px;width:395px;height:1px;background:#48494d"></div>
<div class="a" style="left:567px;top:230.5px;width:445px;height:1.5px;background:#55565a"></div>
<div class="a" style="left:568px;top:246.5px;width:443px;height:17.80000000000001px;background:#141414"></div>
<div class="a" style="left:568px;top:264.3px;width:443px;height:17.69999999999999px;background:#232323"></div>
<div class="a" style="left:568px;top:282px;width:443px;height:18px;background:#141414"></div>
<div class="a" style="left:568px;top:300px;width:443px;height:17.899999999999977px;background:#232323"></div>
<div class="a" style="left:568px;top:317.9px;width:443px;height:17.80000000000001px;background:#141414"></div>
<div class="a" style="left:568px;top:335.7px;width:443px;height:17.900000000000034px;background:#232323"></div>
<div class="a" style="left:568px;top:353.6px;width:443px;height:17.399999999999977px;background:#141414"></div>
<div class="a" style="left:789.5px;top:246.5px;width:1.5px;height:124.5px;background:#2a2a2a"></div>
<div class="a" style="left:567px;top:388.5px;width:445px;height:19.5px;background:#232428;border:1px solid #5a5b5f;border-radius:2px"></div>
<div class="a" style="left:567px;top:418px;width:445px;height:1.5px;background:#48494d"></div>
<div class="a" style="left:959px;top:430.5px;width:45px;height:16.5px;background:linear-gradient(#4d8ef5,#236be0);border-radius:4px"></div>
<div class="a" style="left:567px;top:462px;width:445px;height:1.5px;background:#48494d"></div>
<div class="a" style="left:567px;top:474px;width:445px;height:19.600000000000023px;background:#292929"></div>
<div class="a" style="left:567px;top:493.6px;width:445px;height:17.099999999999966px;background:#151515"></div>
<div class="a" style="left:567px;top:510.7px;width:445px;height:17.900000000000034px;background:#1a56ee"></div>
<div class="a" style="left:567px;top:528.6px;width:445px;height:17.399999999999977px;background:#1d1d1d"></div>
<div class="a" style="left:567px;top:546px;width:445px;height:18px;background:#2a2a2a"></div>
<div class="a" style="left:567px;top:564px;width:445px;height:18px;background:#151515"></div>
<div class="a" style="left:567px;top:582px;width:445px;height:18px;background:#2a2a2a"></div>
<div class="a" style="left:790.5px;top:474px;width:1px;height:126px;background:#111"></div>
<div class="a" style="left:1003px;top:583px;width:9px;height:17px;background:#050505"></div>
<div class="a" style="left:567px;top:600px;width:445px;height:3px;background:#161616"></div>
<svg class="a" style="left:580px;top:494.5px" width="16" height="16" viewBox="0 0 16 16"><rect x="0.5" y="0.5" width="15" height="15" rx="2" fill="#2c5a9c"/><path d="M4 4l8 8M12 4l-8 8M3 8h10" stroke="#cfe0ff" stroke-width="1.6"/></svg>
<svg class="a" style="left:580px;top:512.4px" width="16" height="16" viewBox="0 0 16 16"><rect x="0.5" y="0.5" width="15" height="15" rx="2" fill="#2c5a9c"/><path d="M4 4l8 8M12 4l-8 8M3 8h10" stroke="#cfe0ff" stroke-width="1.6"/></svg>
<svg class="a" style="left:580px;top:529.5px" width="16" height="16" viewBox="0 0 16 16"><rect x="0.5" y="0.5" width="15" height="15" rx="2" fill="#2c5a9c"/><path d="M4 4l8 8M12 4l-8 8M3 8h10" stroke="#cfe0ff" stroke-width="1.6"/></svg>
<svg class="a" style="left:580px;top:547.4px" width="16" height="16" viewBox="0 0 16 16"><rect x="0.5" y="0.5" width="15" height="15" rx="2" fill="#2c5a9c"/><path d="M4 4l8 8M12 4l-8 8M3 8h10" stroke="#cfe0ff" stroke-width="1.6"/></svg>
<svg class="a" style="left:580px;top:566px" width="16" height="16" viewBox="0 0 16 16"><rect x="0.5" y="0.5" width="15" height="15" rx="2" fill="#2c5a9c"/><path d="M4 4l8 8M12 4l-8 8M3 8h10" stroke="#cfe0ff" stroke-width="1.6"/></svg>
<svg class="a" style="left:580px;top:584px" width="16" height="16" viewBox="0 0 16 16"><rect x="0.5" y="0.5" width="15" height="15" rx="2" fill="#2c5a9c"/><path d="M4 4l8 8M12 4l-8 8M3 8h10" stroke="#cfe0ff" stroke-width="1.6"/></svg>
<svg class="a" style="left:1004px;top:478px" width="10" height="10" viewBox="0 0 10 10"><path d="M1 1l8 8M9 1l-8 8" stroke="#fafafa" stroke-width="1.8"/></svg>
<svg class="a" style="left:1004px;top:496.5px" width="10" height="10" viewBox="0 0 10 10"><path d="M1 1l8 8M9 1l-8 8" stroke="#fafafa" stroke-width="1.8"/></svg>
<svg class="a" style="left:1004px;top:532.5px" width="10" height="10" viewBox="0 0 10 10"><path d="M1 1l8 8M9 1l-8 8" stroke="#fafafa" stroke-width="1.8"/></svg>
<svg class="a" style="left:1004px;top:550px" width="10" height="10" viewBox="0 0 10 10"><path d="M1 1l8 8M9 1l-8 8" stroke="#fafafa" stroke-width="1.8"/></svg>
<svg class="a" style="left:1004px;top:568px" width="10" height="10" viewBox="0 0 10 10"><path d="M1 1l8 8M9 1l-8 8" stroke="#fafafa" stroke-width="1.8"/></svg>
<svg class="a" style="left:1005px;top:514px" width="8" height="12" viewBox="0 0 8 12"><path d="M1 1l5 5-5 5" stroke="#cfe0ff" stroke-width="1.8" fill="none"/></svg>
<div class="a" style="left:0px;top:759px;width:1344px;height:9px;background:linear-gradient(#d0d0d0,#dcdcdc);border-top:1.5px solid #a8a8a8"></div>
<div class="t" style="left:753px;top:160.1px;font-size:15px;color:#303030;transform:scaleX(0.981);">Bave«blow</div>
<div class="t" style="left:573px;top:197.6px;font-size:13px;color:#e0e0e0;transform:scaleX(0.931);">Miehre</div>
<div class="t" style="left:625.3px;top:197.6px;font-size:13px;color:#d0d0d0;transform:scaleX(1.012);">Arddctet</div>
<div class="t" style="left:577.5px;top:247.8px;font-size:15px;color:#eeeeee;transform:scaleX(1.019);">Connreter</div>
<div class="t" style="left:590px;top:265.6px;font-size:15px;color:#eeeeee;transform:scaleX(1.031);">AMade</div>
<div class="t" style="left:577.5px;top:283.1px;font-size:15px;color:#eeeeee;transform:scaleX(0.950);">Obste</div>
<div class="t" style="left:592px;top:300.6px;font-size:15px;color:#eeeeee;transform:scaleX(0.944);">Tellents</div>
<div class="t" style="left:591px;top:319.4px;font-size:15px;color:#eeeeee;transform:scaleX(1.056);">Warkn sole</div>
<div class="t" style="left:592px;top:337.2px;font-size:15px;color:#eeeeee;transform:scaleX(1.110);">Tstas ligh</div>
<div class="t" style="left:592px;top:354.4px;font-size:15px;color:#eeeeee;transform:scaleX(0.980);">Tme</div>
<div class="t" style="left:794.5px;top:247.2px;font-size:15px;color:#eeeeee;">50</div>
<div class="t" style="left:794.5px;top:282.6px;font-size:15px;color:#eeeeee;transform:scaleX(0.941);">Tne. 1</div>
<div class="t" style="left:794.5px;top:300.6px;font-size:15px;color:#eeeeee;transform:scaleX(1.043);">Tħ1.1</div>
<div class="t" style="left:794.5px;top:319.4px;font-size:15px;color:#eeeeee;transform:scaleX(1.069);">F44.2</div>
<div class="t" style="left:794.5px;top:337.2px;font-size:15px;color:#eeeeee;transform:scaleX(1.028);">MudBage</div>
<div class="t" style="left:794.5px;top:354.4px;font-size:15px;color:#eeeeee;transform:scaleX(1.069);">F44.3</div>
<div class="t" style="left:579px;top:391.3px;font-size:14px;color:#e0e0e0;transform:scaleX(1.147);">Raddls</div>
<div class="t" style="left:629px;top:391.3px;font-size:14px;color:#8a8a8a;">et21.5</div>
<div class="t" style="left:576.8px;top:431.2px;font-size:15px;color:#f0f0f0;font-weight:bold;">Aotoom Trol</div>
<div class="t" style="left:895.7px;top:431.2px;font-size:15px;color:#e6e6e6;transform:scaleX(0.972);">Cheat0</div>
<div class="t" style="left:971px;top:432.9px;font-size:12px;color:#ffffff;font-weight:bold;transform:scaleX(0.868);">Pide</div>
<div class="t" style="left:578.6px;top:475.8px;font-size:15px;color:#f0f0f0;font-weight:bold;transform:scaleX(0.987);">Cominter</div>
<div class="t" style="left:604px;top:495.1px;font-size:15px;color:#f0f0f0;transform:scaleX(0.933);">Nemer</div>
<div class="t" style="left:604px;top:513.0px;font-size:15px;color:#f0f0f0;transform:scaleX(0.932);">Tenra &amp; Rrconing</div>
<div class="t" style="left:605px;top:530.1px;font-size:15px;color:#f0f0f0;transform:scaleX(0.981);">Toom</div>
<div class="t" style="left:604px;top:548.0px;font-size:15px;color:#f0f0f0;transform:scaleX(0.961);">PheBuint</div>
<div class="t" style="left:604px;top:566.6px;font-size:15px;color:#f0f0f0;">Icom</div>
<div class="t" style="left:604px;top:584.6px;font-size:15px;color:#f0f0f0;transform:scaleX(0.975);">Terguar</div>
<div class="t" style="left:578px;top:604.4px;font-size:15px;color:#f0f0f0;font-weight:bold;transform:scaleX(0.989);">Ust bcuaded</div>
<div class="t" style="left:1018px;top:97.2px;font-size:16px;color:#e6e6e6;transform:scaleX(0.978);">Dater Tiner:</div>
<div class="t" style="left:1018px;top:138.9px;font-size:16px;color:#e6e6e6;">Contiled Sön Upage</div>
<div class="t" style="left:1024px;top:181.2px;font-size:16px;color:#e6e6e6;transform:scaleX(1.018);">intectiom Pul &amp; Istom</div>
<div class="t" style="left:1024px;top:221.7px;font-size:16px;color:#e6e6e6;transform:scaleX(0.966);">Dase-Srepity</div>
<div class="t" style="left:1018px;top:264.1px;font-size:16px;color:#e6e6e6;transform:scaleX(0.981);">Dalen Salercation Tcols</div>
<div class="t" style="left:1019.4px;top:306.2px;font-size:16px;color:#e6e6e6;transform:scaleX(0.981);">Applcatiom Parners</div>
</body></html>
